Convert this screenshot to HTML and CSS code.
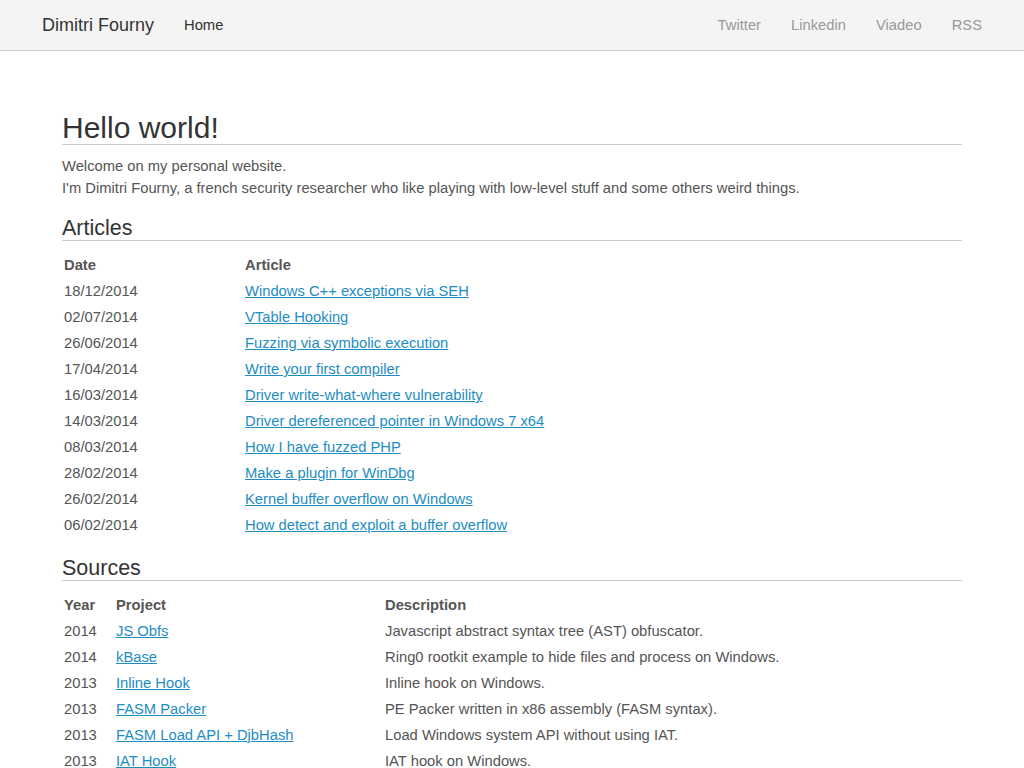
FILE: index.html
```html
<!DOCTYPE html>
<html lang="en">
<head>
<meta charset="utf-8">
<title>Dimitri Fourny</title>
<link rel="stylesheet" href="styles.css">
</head>
<body>
<nav class="navbar">
  <div class="nav-inner">
    <div class="nav-left">
      <a class="brand" href="#">Dimitri Fourny</a>
      <a class="nav-link active" href="#">Home</a>
    </div>
    <div class="nav-right">
      <a class="nav-link" href="#">Twitter</a>
      <a class="nav-link" href="#">Linkedin</a>
      <a class="nav-link" href="#">Viadeo</a>
      <a class="nav-link" href="#">RSS</a>
    </div>
  </div>
</nav>
<main class="content">
  <h1 class="title">Hello world!</h1>
  <p class="intro">Welcome on my personal website.<br>I'm Dimitri Fourny, a french security researcher who like playing with low-level stuff and some others weird things.</p>

  <h2 class="section">Articles</h2>
  <table class="list articles">
    <colgroup><col class="c-date"><col></colgroup>
    <thead><tr><th>Date</th><th>Article</th></tr></thead>
    <tbody>
      <tr><td>18/12/2014</td><td><a href="#">Windows C++ exceptions via SEH</a></td></tr>
      <tr><td>02/07/2014</td><td><a href="#">VTable Hooking</a></td></tr>
      <tr><td>26/06/2014</td><td><a href="#">Fuzzing via symbolic execution</a></td></tr>
      <tr><td>17/04/2014</td><td><a href="#">Write your first compiler</a></td></tr>
      <tr><td>16/03/2014</td><td><a href="#">Driver write-what-where vulnerability</a></td></tr>
      <tr><td>14/03/2014</td><td><a href="#">Driver dereferenced pointer in Windows 7 x64</a></td></tr>
      <tr><td>08/03/2014</td><td><a href="#">How I have fuzzed PHP</a></td></tr>
      <tr><td>28/02/2014</td><td><a href="#">Make a plugin for WinDbg</a></td></tr>
      <tr><td>26/02/2014</td><td><a href="#">Kernel buffer overflow on Windows</a></td></tr>
      <tr><td>06/02/2014</td><td><a href="#">How detect and exploit a buffer overflow</a></td></tr>
    </tbody>
  </table>

  <h2 class="section">Sources</h2>
  <table class="list sources">
    <colgroup><col class="c-year"><col class="c-project"><col></colgroup>
    <thead><tr><th>Year</th><th>Project</th><th>Description</th></tr></thead>
    <tbody>
      <tr><td>2014</td><td><a href="#">JS Obfs</a></td><td>Javascript abstract syntax tree (AST) obfuscator.</td></tr>
      <tr><td>2014</td><td><a href="#">kBase</a></td><td>Ring0 rootkit example to hide files and process on Windows.</td></tr>
      <tr><td>2013</td><td><a href="#">Inline Hook</a></td><td>Inline hook on Windows.</td></tr>
      <tr><td>2013</td><td><a href="#">FASM Packer</a></td><td>PE Packer written in x86 assembly (FASM syntax).</td></tr>
      <tr><td>2013</td><td><a href="#">FASM Load API + DjbHash</a></td><td>Load Windows system API without using IAT.</td></tr>
      <tr><td>2013</td><td><a href="#">IAT Hook</a></td><td>IAT hook on Windows.</td></tr>
    </tbody>
  </table>
</main>
</body>
</html>
```

FILE: styles.css
```css
* { box-sizing: border-box; }
html, body { margin: 0; padding: 0; }
body {
  font-family: "Liberation Sans", Arial, sans-serif;
  font-size: 14.75px;
  line-height: 22px;
  color: #555555;
  background: #ffffff;
}
a { color: #1d8dc4; text-decoration: underline; }

.navbar {
  height: 51px;
  background: #f4f4f4;
  border-bottom: 1px solid #cfcfcf;
}
.nav-inner {
  width: 970px;
  margin: 0 auto;
  padding: 0 15px;
  height: 50px;
  display: flex;
  justify-content: space-between;
  align-items: stretch;
}
.nav-left, .nav-right { display: flex; align-items: stretch; }
.nav-right { margin-right: -15px; }
.brand {
  display: flex;
  align-items: center;
  font-size: 18px;
  color: #333333;
  text-decoration: none;
  padding: 0 15px 0 0;
}
.nav-link {
  display: flex;
  align-items: center;
  padding: 0 15px;
  color: #999999;
  text-decoration: none;
}
.nav-link.active { color: #333333; }

.content {
  width: 900px;
  margin: 0 auto;
  padding-top: 60px;
  padding-bottom: 40px;
}
.title {
  font-size: 30px;
  font-weight: normal;
  line-height: 33px;
  color: #333333;
  margin: 0 0 10px;
  border-bottom: 1px solid #cccccc;
}
.intro { margin: 0 0 -1px; }
.section {
  font-size: 21.5px;
  font-weight: normal;
  line-height: 23px;
  color: #333333;
  margin: 19px 0 11px;
  border-bottom: 1px solid #cccccc;
}
.list {
  width: 100%;
  border-collapse: collapse;
  table-layout: fixed;
}
.list th, .list td {
  text-align: left;
  padding: 2px;
  vertical-align: top;
  white-space: nowrap;
}
.list th { font-weight: bold; color: #555555; }
.c-date { width: 181px; }
.c-year { width: 52px; }
.c-project { width: 269px; }
.sources { margin-bottom: 20px; }
```
